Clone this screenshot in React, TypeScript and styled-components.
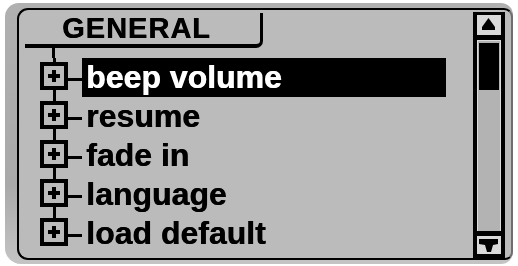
import styled, { createGlobalStyle } from "styled-components";

const GlobalStyle = createGlobalStyle`
	html, body {
		margin: 0;
		padding: 0;
		background: #ffffff;
	}
	body {
		font-family: "Liberation Sans", Arial, sans-serif;
	}
`;

// Grey outer bezel round the LCD panel
const Bezel = styled.div`
	box-sizing: border-box;
	margin: 3px 0 0 5px;
	width: 508px;
	height: 261px;
	padding: 5px 0 4px 12px;
	border-radius: 14px 12px 12px 16px;
	background: linear-gradient(180deg, #b0b0b0 0%, #a9a9a9 70%, #c4c4c4 100%);
	filter: blur(0.35px);
`;

// The panel with the black frame
const Panel = styled.div`
	box-sizing: border-box;
	display: flex;
	width: 496px;
	height: 252px;
	border: 2px solid #000;
	border-right-color: #6e6e6e;
	border-radius: 11px 9px 8px 11px;
	background: #bbbbbb;
`;

const Content = styled.div`
	flex: 1;
	display: flex;
	flex-direction: column;
`;

// "GENERAL" tab, only the bottom and right edges are drawn
const Tab = styled.div`
	box-sizing: border-box;
	margin: 3px 0 0 6px;
	width: 238px;
	height: 35px;
	padding-left: 37px;
	border-right: 3px solid #000;
	border-bottom: 4px solid #000;
	border-bottom-right-radius: 7px;
	font-size: 29px;
	font-weight: 700;
	letter-spacing: 1px;
	line-height: 31px;
	color: #000;
	text-shadow: 0.5px 0 0 #000;
`;

const Lead = styled.div`
	margin-left: 33px;
	width: 3px;
	height: 10px;
	background: #000;
`;

const List = styled.div`
	display: flex;
	flex-direction: column;
`;

const Row = styled.div`
	display: flex;
	height: 39px;
	padding-left: 21px;
`;

const Gutter = styled.div`
	display: flex;
	flex-direction: column;
	align-items: center;
	width: 28px;
`;

const Stem = styled.div<{ $grow?: boolean; $hidden?: boolean }>`
	width: 3px;
	flex: ${(p) => (p.$grow ? "1" : "0 0 4px")};
	background: ${(p) => (p.$hidden ? "transparent" : "#000")};
`;

const PlusBox = styled.div`
	box-sizing: border-box;
	position: relative;
	width: 28px;
	height: 28px;
	border: 4px solid #000;
	background: #bbbbbb;

	&::before,
	&::after {
		content: "";
		position: absolute;
		background: #000;
		left: 50%;
		top: 50%;
		transform: translate(-50%, -50%);
	}
	&::before {
		width: 12px;
		height: 4px;
	}
	&::after {
		width: 4px;
		height: 12px;
	}
`;

const Connector = styled.div`
	width: 14px;
	height: 3px;
	margin-top: 20px;
	background: #000;
`;

const Label = styled.div<{ $selected?: boolean }>`
	flex: 1;
	margin-right: 27px;
	padding-left: 4px;
	font-size: 32px;
	font-weight: 700;
	line-height: 39px;
	white-space: nowrap;
	color: ${(p) => (p.$selected ? "#fff" : "#000")};
	background: ${(p) => (p.$selected ? "#000" : "transparent")};
	text-shadow: 0.6px 0 0 ${(p) => (p.$selected ? "#fff" : "#000")};
`;

// Scroll bar on the right
const Scroll = styled.div`
	box-sizing: border-box;
	display: flex;
	flex-direction: column;
	width: 32px;
	margin: 2px 6px 0 0;
	padding: 3px 4px 4px;
	background: #000;
`;

const ArrowButton = styled.div<{ $h: number }>`
	display: flex;
	height: ${(p) => p.$h}px;
	background: #d9d9d9;
`;

const Track = styled.div`
	box-sizing: border-box;
	flex: 1;
	margin: 5px 0 5px;
	padding: 2px 1px;
	border: 1px solid #dcdcdc;
	border-bottom: none;
	background: #b3b3b3;
`;

const Thumb = styled.div`
	height: 47px;
	background: #000;
`;

const items = ["beep volume", "resume", "fade in", "language", "load default"];

export default function App() {
	return (
		<>
			<GlobalStyle />
			<Bezel>
				<Panel>
					<Content>
						<Tab>GENERAL</Tab>
						<Lead />
						<List>
							{items.map((item, i) => (
								<Row key={item}>
									<Gutter>
										<Stem />
										<PlusBox />
										<Stem $grow $hidden={i === items.length - 1} />
									</Gutter>
									<Connector />
									<Label $selected={i === 0}>{item}</Label>
								</Row>
							))}
						</List>
					</Content>
					<Scroll>
						<ArrowButton $h={20}>
							<svg width="24" height="20" viewBox="0 0 24 20">
								<polygon points="11.5,3 18,12 18,15 5,15 5,12" fill="#000" />
							</svg>
						</ArrowButton>
						<Track>
							<Thumb />
						</Track>
						<ArrowButton $h={18}>
							<svg width="24" height="18" viewBox="0 0 24 18">
								<polygon points="2,3 21,3 21,8 16,9 14,16 10,16 8,9 2,8" fill="#000" />
							</svg>
						</ArrowButton>
					</Scroll>
				</Panel>
			</Bezel>
		</>
	);
}
